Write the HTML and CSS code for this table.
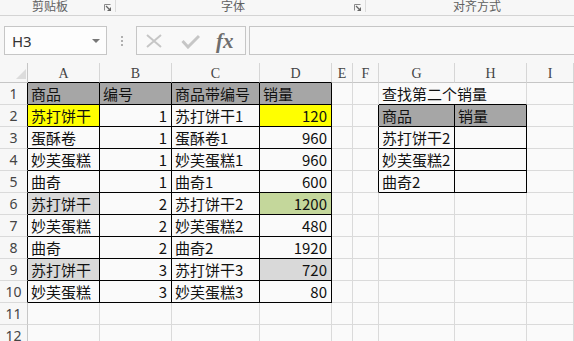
FILE: index.html
```html
<!DOCTYPE html>
<html lang="zh-CN">
<head>
    <meta charset="UTF-8">
    <meta name="viewport" content="width=device-width, initial-scale=1.0">
    <title>商品销量</title>
    <link rel="stylesheet" href="styles.css">
</head>
<body>
    <div class="ribbon">
        <div class="group g1">
            <span class="label">剪贴板</span>
            <svg class="launcher" width="7" height="7" viewBox="0 0 7 7"><path d="M0.5 6.5V0.5H6.5" fill="none" stroke="#8a8a8a"/><path d="M2 2L5 5" stroke="#666" stroke-width="1.2"/><path d="M7 3V7H3Z" fill="#666"/></svg>
        </div>
        <div class="group g2">
            <span class="label">字体</span>
            <svg class="launcher" width="7" height="7" viewBox="0 0 7 7"><path d="M0.5 6.5V0.5H6.5" fill="none" stroke="#8a8a8a"/><path d="M2 2L5 5" stroke="#666" stroke-width="1.2"/><path d="M7 3V7H3Z" fill="#666"/></svg>
        </div>
        <div class="group g3">
            <span class="label">对齐方式</span>
        </div>
    </div>

    <div class="formula-bar">
        <div class="name-box"><span>H3</span><span class="caret"></span></div>
        <div class="grip"><i></i><i></i><i></i></div>
        <div class="fx-buttons">
            <svg class="btn-x" width="16" height="14" viewBox="0 0 16 14"><path d="M1 1L15 13M15 1L1 13" stroke="#c6c6c6" stroke-width="2"/></svg>
            <svg class="btn-ok" width="19" height="15" viewBox="0 0 19 15"><path d="M1.5 7L7 13L18 2" fill="none" stroke="#c6c6c6" stroke-width="3"/></svg>
            <span class="fx">fx</span>
        </div>
        <div class="formula-input"></div>
    </div>

    <div class="sheet">
        <!-- column headers -->
        <div class="corner"></div>
        <div class="ch bb">A</div>
        <div class="ch bb">B</div>
        <div class="ch bb">C</div>
        <div class="ch bb">D</div>
        <div class="ch">E</div>
        <div class="ch">F</div>
        <div class="ch">G</div>
        <div class="ch">H</div>
        <div class="ch">I</div>

        <!-- row 1 -->
        <div class="rh br">1</div>
        <div class="cell bd hd">商品</div>
        <div class="cell bd hd">编号</div>
        <div class="cell bd hd">商品带编号</div>
        <div class="cell bd hd">销量</div>
        <div class="cell"></div>
        <div class="cell"></div>
        <div class="cell span2 bb">查找第二个销量</div>
        <div class="cell"></div>

        <!-- row 2 -->
        <div class="rh br">2</div>
        <div class="cell bd yl">苏打饼干</div>
        <div class="cell bd num">1</div>
        <div class="cell bd">苏打饼干1</div>
        <div class="cell bd num yl">120</div>
        <div class="cell"></div>
        <div class="cell br"></div>
        <div class="cell bd hd">商品</div>
        <div class="cell bd hd">销量</div>
        <div class="cell"></div>

        <!-- row 3 -->
        <div class="rh br">3</div>
        <div class="cell bd">蛋酥卷</div>
        <div class="cell bd num">1</div>
        <div class="cell bd">蛋酥卷1</div>
        <div class="cell bd num">960</div>
        <div class="cell"></div>
        <div class="cell br"></div>
        <div class="cell bd">苏打饼干2</div>
        <div class="cell bd"></div>
        <div class="cell"></div>

        <!-- row 4 -->
        <div class="rh br">4</div>
        <div class="cell bd">妙芙蛋糕</div>
        <div class="cell bd num">1</div>
        <div class="cell bd">妙芙蛋糕1</div>
        <div class="cell bd num">960</div>
        <div class="cell"></div>
        <div class="cell br"></div>
        <div class="cell bd">妙芙蛋糕2</div>
        <div class="cell bd"></div>
        <div class="cell"></div>

        <!-- row 5 -->
        <div class="rh br">5</div>
        <div class="cell bd">曲奇</div>
        <div class="cell bd num">1</div>
        <div class="cell bd">曲奇1</div>
        <div class="cell bd num">600</div>
        <div class="cell"></div>
        <div class="cell br"></div>
        <div class="cell bd">曲奇2</div>
        <div class="cell bd"></div>
        <div class="cell"></div>

        <!-- row 6 -->
        <div class="rh br">6</div>
        <div class="cell bd lg">苏打饼干</div>
        <div class="cell bd num">2</div>
        <div class="cell bd">苏打饼干2</div>
        <div class="cell bd num gn">1200</div>
        <div class="cell"></div>
        <div class="cell"></div>
        <div class="cell"></div>
        <div class="cell"></div>
        <div class="cell"></div>

        <!-- row 7 -->
        <div class="rh br">7</div>
        <div class="cell bd">妙芙蛋糕</div>
        <div class="cell bd num">2</div>
        <div class="cell bd">妙芙蛋糕2</div>
        <div class="cell bd num">480</div>
        <div class="cell"></div>
        <div class="cell"></div>
        <div class="cell"></div>
        <div class="cell"></div>
        <div class="cell"></div>

        <!-- row 8 -->
        <div class="rh br">8</div>
        <div class="cell bd">曲奇</div>
        <div class="cell bd num">2</div>
        <div class="cell bd">曲奇2</div>
        <div class="cell bd num">1920</div>
        <div class="cell"></div>
        <div class="cell"></div>
        <div class="cell"></div>
        <div class="cell"></div>
        <div class="cell"></div>

        <!-- row 9 -->
        <div class="rh br">9</div>
        <div class="cell bd lg">苏打饼干</div>
        <div class="cell bd num">3</div>
        <div class="cell bd">苏打饼干3</div>
        <div class="cell bd num lg">720</div>
        <div class="cell"></div>
        <div class="cell"></div>
        <div class="cell"></div>
        <div class="cell"></div>
        <div class="cell"></div>

        <!-- row 10 -->
        <div class="rh br">10</div>
        <div class="cell bd">妙芙蛋糕</div>
        <div class="cell bd num">3</div>
        <div class="cell bd">妙芙蛋糕3</div>
        <div class="cell bd num">80</div>
        <div class="cell"></div>
        <div class="cell"></div>
        <div class="cell"></div>
        <div class="cell"></div>
        <div class="cell"></div>

        <!-- row 11 -->
        <div class="rh">11</div>
        <div class="cell"></div>
        <div class="cell"></div>
        <div class="cell"></div>
        <div class="cell"></div>
        <div class="cell"></div>
        <div class="cell"></div>
        <div class="cell"></div>
        <div class="cell"></div>
        <div class="cell"></div>

        <!-- row 12 -->
        <div class="rh">12</div>
        <div class="cell"></div>
        <div class="cell"></div>
        <div class="cell"></div>
        <div class="cell"></div>
        <div class="cell"></div>
        <div class="cell"></div>
        <div class="cell"></div>
        <div class="cell"></div>
        <div class="cell"></div>
    </div>
</body>
</html>
```

FILE: styles.css
```css
* {
    box-sizing: border-box;
}
body {
    margin: 0;
    width: 574px;
    height: 341px;
    overflow: hidden;
    background-color: #f7f7f7;
    font-family: "Noto Sans CJK SC", sans-serif;
}

/* ribbon group captions */
.ribbon {
    display: flex;
    height: 16px;
    border-bottom: 1px solid #d4d4d4;
    overflow: hidden;
}
.group {
    display: flex;
    flex-shrink: 0;
    height: 12px;
}
.g1 {
    width: 116px;
    border-right: 1px solid #dcdcdc;
}
.g2 {
    width: 250px;
    border-right: 1px solid #dcdcdc;
}
.g3 {
    flex: 1;
    flex-shrink: 1;
}
.label {
    display: block;
    font-size: 12px;
    line-height: 12px;
    color: #606060;
    text-align: center;
}
.g1 .label {
    width: 100px;
}
.g2 .label {
    width: 234px;
}
.g3 .label {
    padding-left: 87px;
    text-align: left;
}
.launcher {
    margin: 4px 0 0 4px;
}

/* name box, buttons and formula input */
.formula-bar {
    display: flex;
    height: 29px;
    margin-top: 10px;
}
.name-box {
    display: flex;
    align-items: center;
    justify-content: space-between;
    width: 103px;
    margin-left: 4px;
    padding: 0 6px 0 7px;
    border: 1px solid #c6c6c6;
    background: #fdfdfd;
    font-family: "Noto Sans", sans-serif;
    font-size: 15px;
    color: #333;
}
.caret {
    width: 0;
    height: 0;
    margin-top: 1px;
    border-top: 4px solid #777;
    border-left: 4px solid transparent;
    border-right: 4px solid transparent;
}
.grip {
    display: flex;
    flex-direction: column;
    align-items: center;
    justify-content: center;
    gap: 2px;
    width: 29px;
}
.grip i {
    width: 2px;
    height: 2px;
    background: #b0b0b0;
}
.fx-buttons {
    display: flex;
    align-items: center;
    width: 110px;
    border: 1px solid #c6c6c6;
    background: #f9f9f9;
}
.btn-x {
    margin-left: 9px;
}
.btn-ok {
    margin-left: 19px;
    margin-top: 1px;
}
.fx {
    margin-left: 16px;
    font-family: "Liberation Serif", serif;
    font-style: italic;
    font-weight: bold;
    font-size: 21px;
    line-height: 20px;
    color: #6e6e6e;
}
.formula-input {
    flex: 1;
    margin-left: 3px;
    border: 1px solid #c6c6c6;
    border-right: none;
    background: #f9f9f9;
}

/* worksheet grid */
.sheet {
    display: grid;
    grid-template-columns: 28px 72px 72px 88px 72px 21px 26px 76px 72px 1fr;
    grid-template-rows: 20px repeat(12, 22px);
    margin-top: 8px;
    background: #fafafa;
}
.corner {
    display: flex;
    justify-content: flex-end;
    align-items: flex-end;
    padding: 0 1px 3px 0;
    border-right: 1px solid #c6c6c6;
    border-bottom: 1px solid #c6c6c6;
    background: #f7f7f7;
}
.corner::after {
    content: "";
    width: 0;
    height: 0;
    border-left: 10px solid transparent;
    border-bottom: 10px solid #dcdcdc;
}
.ch {
    padding-top: 3px;
    border-right: 1px solid #d6d6d6;
    border-bottom: 1px solid #c6c6c6;
    background: #f7f7f7;
    font-family: "Liberation Serif", serif;
    font-size: 14px;
    line-height: 16px;
    color: #444;
    text-align: center;
}
.rh {
    border-right: 1px solid #c6c6c6;
    border-bottom: 1px solid #dadada;
    background: #f7f7f7;
    font-family: "Noto Sans", sans-serif;
    font-size: 14px;
    line-height: 21px;
    color: #444;
    text-align: center;
}
.cell {
    padding: 0 4px 0 3px;
    border-right: 1px solid #dadada;
    border-bottom: 1px solid #dadada;
    font-size: 15px;
    line-height: 21px;
    color: #111;
    white-space: nowrap;
}
.num {
    text-align: right;
}
.span2 {
    grid-column: span 2;
}

/* black box borders */
.bd {
    border-right-color: #000;
    border-bottom-color: #000;
}
.bb {
    border-bottom-color: #000;
}
.br {
    border-right-color: #000;
}

/* fills */
.hd {
    background: #a6a6a6;
}
.yl {
    background: #ffff00;
}
.gn {
    background: #c4d79b;
}
.lg {
    background: #d9d9d9;
}
```
